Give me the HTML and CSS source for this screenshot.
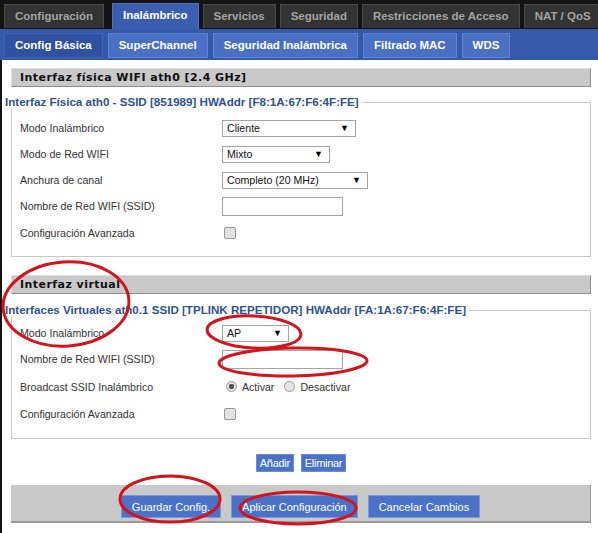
FILE: index.html
```html
<!DOCTYPE html>
<html lang="es">
<head>
    <meta charset="UTF-8">
    <meta name="viewport" content="width=device-width, initial-scale=1.0">
    <title>Inalámbrico - Config Básica</title>
    <link rel="stylesheet" href="styles.css">
</head>
<body>
    <div class="top">
        <ul class="main-tabs">
            <li>Configuración</li>
            <li class="active">Inalámbrico</li>
            <li>Servicios</li>
            <li>Seguridad</li>
            <li>Restricciones de Acceso</li>
            <li>NAT / QoS</li>
        </ul>
        <ul class="sub-tabs">
            <li class="active">Config Básica</li>
            <li>SuperChannel</li>
            <li>Seguridad Inalámbrica</li>
            <li>Filtrado MAC</li>
            <li>WDS</li>
        </ul>
    </div>

    <div class="content">
        <h2 class="section-title">Interfaz física WIFI ath0 [2.4 GHz]</h2>
        <div class="group">
            <div class="group-head">
                <span class="legend">Interfaz Física ath0 - SSID [851989] HWAddr [F8:1A:67:F6:4F:FE]</span>
                <span class="rule"></span>
            </div>
            <div class="group-body">
                <div class="row">
                    <label>Modo Inalámbrico</label>
                    <div class="select w-cliente"><span>Cliente</span><span class="arrow">▼</span></div>
                </div>
                <div class="row">
                    <label>Modo de Red WIFI</label>
                    <div class="select w-mixto"><span>Mixto</span><span class="arrow">▼</span></div>
                </div>
                <div class="row">
                    <label>Anchura de canal</label>
                    <div class="select w-canal"><span>Completo (20 MHz)</span><span class="arrow">▼</span></div>
                </div>
                <div class="row">
                    <label>Nombre de Red WIFI (SSID)</label>
                    <input type="text" class="text-field" value="">
                </div>
                <div class="row tall">
                    <label>Configuración Avanzada</label>
                    <input type="checkbox" class="check">
                </div>
            </div>
        </div>

        <h2 class="section-title second">Interfaz virtual</h2>
        <div class="group virtual">
            <div class="group-head">
                <span class="legend">Interfaces Virtuales ath0.1 SSID [TPLINK REPETIDOR] HWAddr [FA:1A:67:F6:4F:FE]</span>
                <span class="rule"></span>
            </div>
            <div class="group-body">
                <div class="row">
                    <label>Modo Inalámbrico</label>
                    <div class="select w-ap"><span>AP</span><span class="arrow">▼</span></div>
                </div>
                <div class="row">
                    <label>Nombre de Red WIFI (SSID)</label>
                    <input type="text" class="text-field" value="">
                </div>
                <div class="row taller">
                    <label>Broadcast SSID Inalámbrico</label>
                    <div class="radios">
                        <input type="radio" class="radio" name="bcast" checked><span class="opt">Activar</span>
                        <input type="radio" class="radio" name="bcast"><span>Desactivar</span>
                    </div>
                </div>
                <div class="row">
                    <label>Configuración Avanzada</label>
                    <input type="checkbox" class="check">
                </div>
            </div>
        </div>

        <div class="add-row">
            <button class="small-btn">Añadir</button>
            <button class="small-btn">Eliminar</button>
        </div>

        <div class="submit-bar">
            <button class="btn">Guardar Config.</button>
            <button class="btn">Aplicar Configuración</button>
            <button class="btn">Cancelar Cambios</button>
        </div>
    </div>

    <!-- marcas rojas a mano -->
    <svg class="marks" width="598" height="533" viewBox="0 0 598 533">
        <g fill="none" stroke="#d3141c" stroke-width="3">
            <ellipse cx="66" cy="304" rx="63" ry="42" transform="rotate(-4 66 304)"/>
            <ellipse cx="254" cy="332" rx="47" ry="16" transform="rotate(3 254 332)"/>
            <ellipse cx="293" cy="362" rx="74" ry="14" transform="rotate(-1 293 362)"/>
            <ellipse cx="170" cy="499" rx="50" ry="23"/>
            <ellipse cx="298" cy="508" rx="58" ry="16"/>
        </g>
    </svg>
</body>
</html>
```

FILE: styles.css
```css
body {
    margin: 0;
    background-color: #fff;
    font-family: 'Liberation Sans', Arial, sans-serif;
    font-size: 10.6px;
    color: #222;
    position: relative;
    width: 598px;
    height: 533px;
    overflow: hidden;
}
ul {
    list-style: none;
    margin: 0;
    padding: 0;
}
.top {
    background-color: #141414;
}
.main-tabs {
    display: flex;
    gap: 4px;
    padding: 4px 0 0 4px;
    height: 25px;
}
.main-tabs li {
    height: 23px;
    line-height: 23px;
    padding: 0 10px;
    background-color: #333;
    border: 1px solid #484848;
    border-bottom: none;
    color: #a3a3a3;
    font-weight: bold;
    font-size: 11.5px;
    white-space: nowrap;
}
.main-tabs li:first-child {
    margin-right: 4px;
}
.main-tabs .active {
    background-color: #3a5db0;
    border-color: #4d70c2;
    color: #fff;
    height: 25px;
    margin-top: -1px;
}
.sub-tabs {
    display: flex;
    gap: 5px;
    background-color: #3658a8;
    padding: 4px 0 2px 4px;
    height: 25px;
}
.sub-tabs li {
    height: 23px;
    line-height: 23px;
    padding: 0 10px;
    background-color: #4a70c6;
    border: 1px solid #5f83d3;
    color: #fff;
    font-weight: bold;
    font-size: 11.5px;
    white-space: nowrap;
}
.sub-tabs .active {
    background-color: #2f519f;
    border-color: #4164b6;
}
.content {
    border-left: 2px solid #141414;
    padding: 8px 7px 11px 3px;
}
.section-title {
    margin: 0 0 0 6px;
    height: 17px;
    line-height: 17px;
    padding-left: 8px;
    background-color: #c9c9c9;
    border-top: 1px solid #dedede;
    border-left: 1px solid #dedede;
    border-bottom: 1px solid #8d8d8d;
    border-right: 1px solid #8d8d8d;
    font-family: 'DejaVu Sans', Verdana, sans-serif;
    font-size: 11px;
    font-weight: bold;
    letter-spacing: 0.45px;
    color: #111;
}
.section-title.second {
    margin-top: 18px;
}
.group {
    margin-top: 8px;
}
.group.virtual {
    margin-top: 9px;
}
.group-head {
    display: flex;
    height: 14px;
}
.legend {
    line-height: 14px;
    padding-right: 3px;
    color: #2b5394;
    font-weight: bold;
    font-size: 11.6px;
    white-space: nowrap;
}
.rule {
    flex: 1;
    margin-top: 7px;
    border-top: 1px solid #c8c8c8;
    border-right: 1px solid #c8c8c8;
}
.group-body {
    margin-left: 6px;
    padding: 6px 0 9px 8px;
    border: 1px solid #c8c8c8;
    border-top: none;
}
.virtual .group-body {
    padding-top: 3px;
    padding-bottom: 11px;
}
.row {
    display: grid;
    grid-template-columns: 202px auto;
    justify-content: start;
    align-items: center;
    height: 26px;
}
.row.tall {
    height: 28px;
}
.row.taller {
    height: 29px;
}
.row label {
    color: #333;
}
.select {
    display: flex;
    justify-content: space-between;
    align-items: center;
    height: 15px;
    border: 1px solid #a4a4a4;
    background-color: #fff;
    padding: 0 6px 0 4px;
    color: #111;
}
.select .arrow {
    font-size: 9px;
    color: #000;
}
.w-cliente { width: 122px; }
.w-mixto { width: 96px; }
.w-canal { width: 134px; }
.w-ap { width: 55px; }
.text-field {
    width: 121px;
    height: 19px;
    box-sizing: border-box;
    margin: 0;
    padding: 0 3px;
    border: 1px solid #a4a4a4;
    font-family: inherit;
    font-size: 10.6px;
}
.check {
    appearance: none;
    width: 12px;
    height: 12px;
    margin: 0 0 0 2px;
    border: 1px solid #999;
    border-radius: 2px;
    background-color: #e2e2e2;
}
.radios {
    display: flex;
    align-items: center;
    padding-left: 4px;
    color: #333;
}
.radio {
    appearance: none;
    width: 11px;
    height: 11px;
    margin: 0 5px 0 0;
    border: 1px solid #9a9a9a;
    border-radius: 50%;
    background-color: #e4e4e4;
}
.radio:checked {
    background: radial-gradient(circle, #555 0 2.5px, #e4e4e4 3px);
}
.radios .opt {
    margin-right: 10px;
}
.add-row {
    display: flex;
    justify-content: center;
    gap: 7px;
    margin: 15px 0 13px 6px;
}
.small-btn {
    height: 18px;
    padding: 0 3px;
    background-color: #4a72c8;
    border: 1px solid #6b8dd6;
    color: #fff;
    font-family: inherit;
    font-size: 11px;
    letter-spacing: -0.3px;
}
.submit-bar {
    display: flex;
    justify-content: center;
    gap: 10px;
    margin-left: 6px;
    padding: 10px 0 3px 0;
    height: 23px;
    background-color: #c9c9c9;
    border-bottom: 2px solid #999;
    border-right: 1px solid #999;
}
.btn {
    height: 23px;
    padding: 0 10px;
    background-color: #4a72c8;
    border: 1px solid #7b98da;
    color: #fff;
    font-family: inherit;
    font-size: 11px;
}
.marks {
    position: absolute;
    left: 0;
    top: 0;
    pointer-events: none;
}
```
